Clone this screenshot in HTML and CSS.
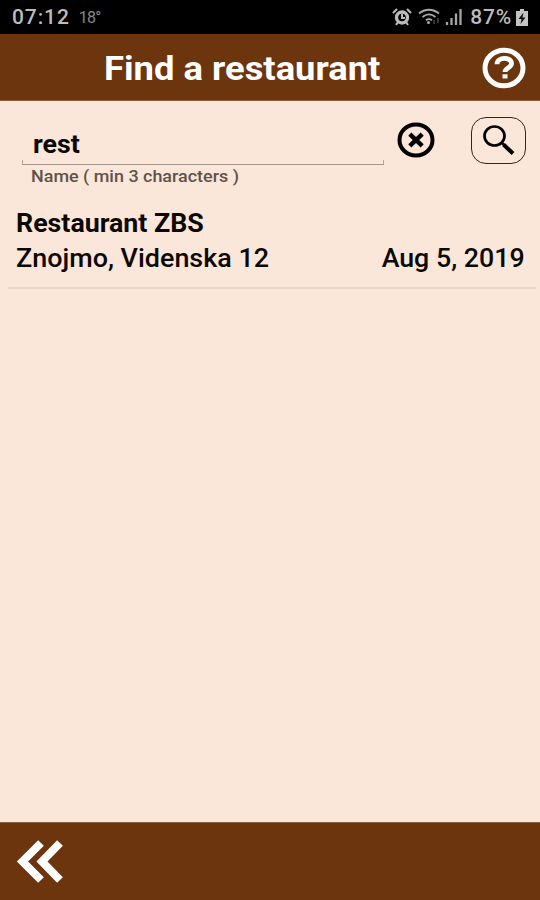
FILE: index.html
```html
<!DOCTYPE html>
<html lang="en">
  <head>
    <meta charset="UTF-8" />
    <meta name="viewport" content="width=device-width, initial-scale=1.0" />
    <title>Find a restaurant</title>
    <link rel="stylesheet" href="styles.css">
  </head>
  <body>
    <div class="status-bar">
      <span class="clock">07:12</span>
      <span class="temp">18°</span>
      <div class="status-icons">
        <svg class="alarm" width="20" height="18" viewBox="0 0 20 18">
          <circle cx="10" cy="9.5" r="5.5" fill="none" stroke="#bbb" stroke-width="3.4" />
          <path d="M10 6v4h3M1 5l4-4M19 5l-4-4M4 17l2-3M16 17l-2-3" fill="none" stroke="#bbb" stroke-width="2" />
        </svg>
        <svg class="wifi" width="24" height="18" viewBox="0 0 24 18">
          <path d="M1 5.5c6-5 14-5 20 0M4.500 9c4-3.300 9-3.300 13 0M8 12.300c2-1.600 4-1.600 6 0" fill="none" stroke="#aaa" stroke-width="1.800" />
          <circle cx="10.500" cy="14.500" r="1.500" fill="#aaa" />
          <path d="M16 12v4M20 10v5" stroke="#333" stroke-width="2" />
        </svg>
        <svg class="signal" width="18" height="18" viewBox="0 0 18 18">
          <path d="M2 14v3M6.500 10v7M11 5.500v11.500M15.500 1v16" stroke="#a5a5a5" stroke-width="2.300" />
        </svg>
        <span class="percent">87%</span>
        <svg class="battery" width="12" height="17" viewBox="0 0 12 17">
          <path d="M4 0h4v2h4v15H0V2h4z" fill="#c4c4c4" />
          <path d="M7.500 3.500L2.500 10h3L4.500 15l5-6.500h-3z" fill="#111" />
        </svg>
      </div>
    </div>

    <header class="title-bar">
      <h1>Find a restaurant</h1>
      <svg class="help" width="44" height="42" viewBox="0 0 44 42">
        <ellipse cx="22" cy="21" rx="19" ry="17.800" fill="none" stroke="#fff" stroke-width="5" />
        <path d="M15 17.300c0-7.700 14.500-7.700 14.500-.8 0 4.200-6.500 4.200-6.500 8.500" fill="none" stroke="#fff" stroke-width="4.800" />
        <path d="M20.500 27.300h5v4.200h-5z" fill="#fff" />
      </svg>
    </header>

    <main>
      <form class="search">
        <div class="field">
          <div class="value"><span>rest</span></div>
          <div class="hint"><span>Name ( min 3 characters )</span></div>
        </div>
        <svg class="clear" width="38" height="36" viewBox="0 0 38 36">
          <ellipse cx="19" cy="18" rx="16.500" ry="15.500" fill="none" stroke="#000" stroke-width="4" />
          <path d="M12.800 12.200l12.400 11.600M25.200 12.200L12.800 23.800" stroke="#000" stroke-width="4.500" />
        </svg>
        <div class="search-button">
          <svg width="32" height="31" viewBox="0 0 32 31">
            <ellipse cx="11.500" cy="11" rx="10" ry="9.500" fill="none" stroke="#000" stroke-width="2.700" />
            <path d="M18.500 17.500l2.500 2.500" stroke="#000" stroke-width="2.500" />
            <path d="M20.500 19.500l9.500 9" stroke="#000" stroke-width="4" />
          </svg>
        </div>
      </form>

      <div class="result">
        <div class="name"><span>Restaurant ZBS</span></div>
        <div class="details">
          <span class="address">Znojmo, Videnska 12</span>
          <span class="date">Aug 5, 2019</span>
        </div>
      </div>
    </main>

    <footer class="bottom-bar">
      <svg width="48" height="46" viewBox="0 0 48 46">
        <path d="M25 4L6.500 22.500 25 41M44 4L26 22.500 44 41" fill="none" stroke="#fff" stroke-width="8" />
      </svg>
    </footer>
  </body>
</html>
```

FILE: styles.css
```css
* {
  box-sizing: border-box;
}

body {
  margin: 0;
  height: 900px;
  display: flex;
  flex-direction: column;
  font-family: Roboto, sans-serif;
  background: #fae7d9;
  color: #0c0806;
  white-space: nowrap;
  overflow: hidden;
}

svg {
  display: block;
  flex-shrink: 0;
}

.status-bar {
  height: 34px;
  display: flex;
  align-items: center;
  padding: 0 12px;
  background: #000;
  color: #bcbcbc;
}

.clock {
  font-size: 21px;
  font-weight: 500;
  letter-spacing: 0.9px;
}

.temp {
  margin-left: 9px;
  font-size: 16px;
  letter-spacing: -0.8px;
  color: #888;
}

.status-icons {
  display: flex;
  align-items: center;
  margin-left: auto;
}

.wifi {
  margin-left: 6px;
}

.signal {
  margin-left: 3px;
}

.percent {
  margin: 0 4px 0 7px;
  font-size: 21px;
  font-weight: 500;
  letter-spacing: 0.8px;
}

.title-bar {
  height: 67px;
  display: flex;
  align-items: center;
  padding: 2px 14px 0 104px;
  background: #6d350e;
  border-bottom: 1px solid #8d5c3c;
  color: #fff;
}

/* wide Roboto */
h1,
.value span,
.hint span,
.name span,
.address,
.date {
  display: inline-block;
  transform: scaleX(1.07);
  transform-origin: left;
}

h1 {
  margin: 0;
  font-size: 34px;
  font-weight: 700;
  line-height: 40px;
}

.help {
  margin-left: auto;
}

main {
  flex: 1;
}

.search {
  height: 100px;
  display: flex;
  align-items: flex-start;
  padding: 16px 14px 0 22px;
}

.field {
  width: 362px;
}

.value {
  height: 48px;
  padding: 12px 11px 0;
  font-size: 25px;
  font-weight: 700;
  line-height: 32px;
  /* short ticks at both ends of the underline */
  background:
    linear-gradient(#b5a79d, #b5a79d) left bottom / 1px 4px no-repeat,
    linear-gradient(#b5a79d, #b5a79d) right bottom / 1px 4px no-repeat;
  border-bottom: 1px solid #a4978e;
}

.hint {
  padding-left: 9px;
  font-size: 17px;
  font-weight: 500;
  line-height: 23px;
  color: #5f524a;
}

.hint span {
  transform: scaleX(1.055);
}

.clear {
  margin: 5px 0 0 13px;
}

.search-button {
  width: 55px;
  height: 47px;
  margin-left: auto;
  padding: 7px 0 0 11px;
  border: 1px solid #33261f;
  border-radius: 15px;
}

.result {
  height: 88px;
  margin: 0 4px 0 8px;
  padding: 6px 11px 0 8px;
  border-bottom: 2px solid #ecd9cc;
}

.name {
  font-size: 25px;
  font-weight: 700;
  line-height: 34px;
}

.details {
  display: flex;
  justify-content: space-between;
  font-size: 25px;
  font-weight: 500;
  line-height: 35px;
}

.address {
  transform: scaleX(1.076);
}

.date {
  transform-origin: right;
}

.bottom-bar {
  height: 78px;
  padding: 16px;
  background: #6d350e;
  border-top: 1px solid #8d5c3c;
}
```
